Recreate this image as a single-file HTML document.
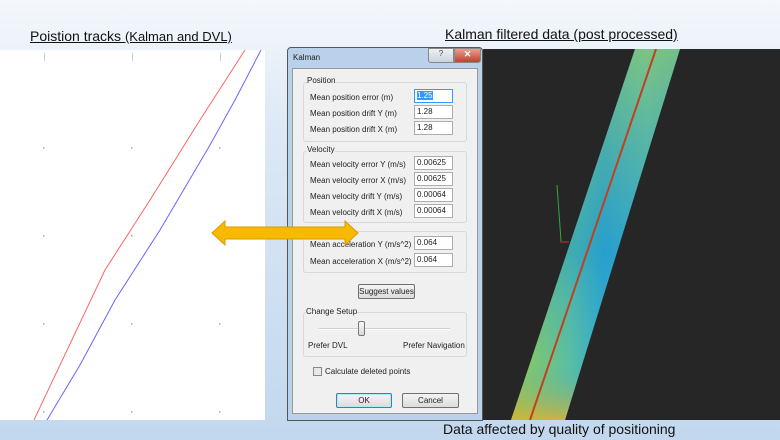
<!DOCTYPE html>
<html><head><meta charset="utf-8"><style>
*{margin:0;padding:0;box-sizing:border-box}
body{width:780px;height:440px;overflow:hidden;position:relative;font-family:"Liberation Sans",sans-serif;background:linear-gradient(180deg,#f4f8fc 0%,#dce8f5 30%,#c2d8ee 100%)}
.a{position:absolute}
.t{font-size:8px;color:#222;white-space:nowrap}
.in{position:absolute;left:414px;width:39px;height:14px;background:#fff;border:1px solid #abadb3;font-size:8px;padding:1px 2px;color:#222}
.grp{position:absolute;border:1px solid #d8d8d8;border-radius:3px;left:303px;width:164px}
.btn{position:absolute;height:15px;border:1px solid #707070;border-radius:2px;background:linear-gradient(#f4f4f4,#dcdcdc);font-size:8px;text-align:center;line-height:13px;color:#222}
</style></head><body>
<div class="a" style="left:30px;top:28px;font-size:14px;color:#111;text-decoration:underline">Poistion tracks <span style="font-size:13px">(Kalman and DVL)</span></div>
<div class="a" style="left:445px;top:26px;font-size:14px;color:#111;text-decoration:underline">Kalman filtered data (post processed)</div>
<div class="a" style="left:0;top:50px;width:265px;height:370px;background:#fff"></div>
<svg class="a" style="left:0;top:50px" width="265" height="370">
<g fill="#aaa"><rect x="43" y="97" width="1.5" height="1.5"/><rect x="131" y="97" width="1.5" height="1.5"/><rect x="219" y="97" width="1.5" height="1.5"/>
<rect x="43" y="185" width="1.5" height="1.5"/><rect x="131" y="185" width="1.5" height="1.5"/>
<rect x="43" y="273" width="1.5" height="1.5"/><rect x="131" y="273" width="1.5" height="1.5"/><rect x="219" y="273" width="1.5" height="1.5"/>
<rect x="43" y="361" width="1.5" height="1.5"/><rect x="131" y="361" width="1.5" height="1.5"/><rect x="219" y="361" width="1.5" height="1.5"/>
<rect x="44" y="3" width="1" height="8" fill="#ccc"/><rect x="132" y="3" width="1" height="8" fill="#ccc"/><rect x="220" y="3" width="1" height="8" fill="#ccc"/></g>
<polyline points="245,0 200,70 150,150 105,220 34,370" fill="none" stroke="#f66" stroke-width="1"/>
<polyline points="261,0 235,50 210,95 160,180 115,250 80,315 47,370" fill="none" stroke="#66f" stroke-width="1"/>
</svg>
<div class="a" style="left:483px;top:49px;width:297px;height:371px;background:#262626;overflow:hidden">
<svg width="297" height="371">
<defs><linearGradient id="g" x1="0" y1="0" x2="1" y2="0"><stop offset="0" stop-color="#9ccc48"/><stop offset=".35" stop-color="#5cc0a0"/><stop offset=".55" stop-color="#30a8d0"/><stop offset=".8" stop-color="#48b8c8"/><stop offset="1" stop-color="#38acd0"/></linearGradient>
<linearGradient id="v" x1="0" y1="0" x2="0" y2="1"><stop offset="0" stop-color="#b0d040" stop-opacity=".5"/><stop offset=".55" stop-color="#1890c8" stop-opacity=".4"/><stop offset=".85" stop-color="#40b0c0" stop-opacity=".1"/><stop offset="1" stop-color="#e0b030" stop-opacity=".8"/></linearGradient></defs>
<polygon points="152,0 197,0 82,371 28,371" fill="url(#g)"/>
<polygon points="152,0 197,0 82,371 28,371" fill="url(#v)"/>
<line x1="173" y1="0" x2="47" y2="371" stroke="#c04020" stroke-width="2"/>
<line x1="74" y1="136" x2="78" y2="192" stroke="#3a3" stroke-width="1"/>
<line x1="77" y1="193" x2="86" y2="193" stroke="#c33" stroke-width="1"/>
</svg></div>
<div class="a" style="left:287px;top:47px;width:196px;height:374px;background:#b9d1ea;border:1px solid #555;border-radius:4px 4px 0 0"></div>
<div class="a" style="left:293px;top:53px;font-size:8px;color:#222">Kalman</div>
<div class="a" style="left:428px;top:48px;width:26px;height:15px;border:1px solid #888;border-radius:0 0 0 3px;background:linear-gradient(#f0f0f0,#c8d4e0);font-size:8px;text-align:center;color:#444">?</div>
<div class="a" style="left:454px;top:48px;width:27px;height:15px;border:1px solid #888;border-radius:0 0 3px 0;background:linear-gradient(#e8a090,#c04030);font-size:9px;font-weight:bold;text-align:center;color:#fff">✕</div>
<div class="a" style="left:292px;top:68px;width:186px;height:346px;background:#f0f0f0;border:1px solid #999"></div>
<div class="grp" style="top:82px;height:60px"></div>
<div class="a t" style="left:307px;top:76px;background:#f0f0f0">Position</div>
<div class="a t" style="left:310px;top:93px">Mean position error (m)</div><div class="in" style="top:89px;border-color:#3399ff"><span style="background:#3399ff;color:#fff">1.25</span></div>
<div class="a t" style="left:310px;top:109px">Mean position drift Y (m)</div><div class="in" style="top:105px">1.28</div>
<div class="a t" style="left:310px;top:125px">Mean position drift X (m)</div><div class="in" style="top:121px">1.28</div>
<div class="grp" style="top:151px;height:72px"></div>
<div class="a t" style="left:307px;top:145px;background:#f0f0f0">Velocity</div>
<div class="a t" style="left:310px;top:160px">Mean velocity error Y (m/s)</div><div class="in" style="top:156px">0.00625</div>
<div class="a t" style="left:310px;top:176px">Mean velocity error X (m/s)</div><div class="in" style="top:172px">0.00625</div>
<div class="a t" style="left:310px;top:192px">Mean velocity drift Y (m/s)</div><div class="in" style="top:188px">0.00064</div>
<div class="a t" style="left:310px;top:208px">Mean velocity drift X (m/s)</div><div class="in" style="top:204px">0.00064</div>
<div class="grp" style="top:231px;height:42px"></div>
<div class="a t" style="left:310px;top:240px">Mean acceleration Y (m/s^2)</div><div class="in" style="top:236px">0.064</div>
<div class="a t" style="left:310px;top:257px">Mean acceleration X (m/s^2)</div><div class="in" style="top:253px">0.064</div>
<div class="btn" style="left:358px;top:284px;width:57px">Suggest values</div>
<div class="grp" style="top:312px;height:45px"></div>
<div class="a t" style="left:306px;top:307px;background:#f0f0f0">Change Setup</div>
<div class="a" style="left:319px;top:328px;width:131px;height:2px;background:#d0d0d0;border-bottom:1px solid #fff"></div>
<div class="a" style="left:358px;top:321px;width:7px;height:15px;border:1px solid #777;border-radius:2px;background:linear-gradient(#f8f8f8,#d8d8d8)"></div>
<div class="a t" style="left:308px;top:341px">Prefer DVL</div>
<div class="a t" style="left:403px;top:341px">Prefer Navigation</div>
<div class="a" style="left:313px;top:367px;width:9px;height:9px;border:1px solid #888;background:#e8e8e8"></div>
<div class="a t" style="left:325px;top:367px">Calculate deleted points</div>
<div class="btn" style="left:336px;top:393px;width:56px;border-color:#3c7fb1;box-shadow:inset 0 0 0 1px #aee">OK</div>
<div class="btn" style="left:402px;top:393px;width:57px">Cancel</div>
<svg class="a" style="left:205px;top:216px" width="160" height="34">
<polygon points="7,17 20,5 20,11 140,11 140,5 153,17 140,29 140,23 20,23 20,29" fill="#f9b900" stroke="#d99a00" stroke-width="1"/>
</svg>
<div class="a" style="left:443px;top:421px;font-size:14px;color:#111">Data affected by quality of positioning</div>
</body></html>
